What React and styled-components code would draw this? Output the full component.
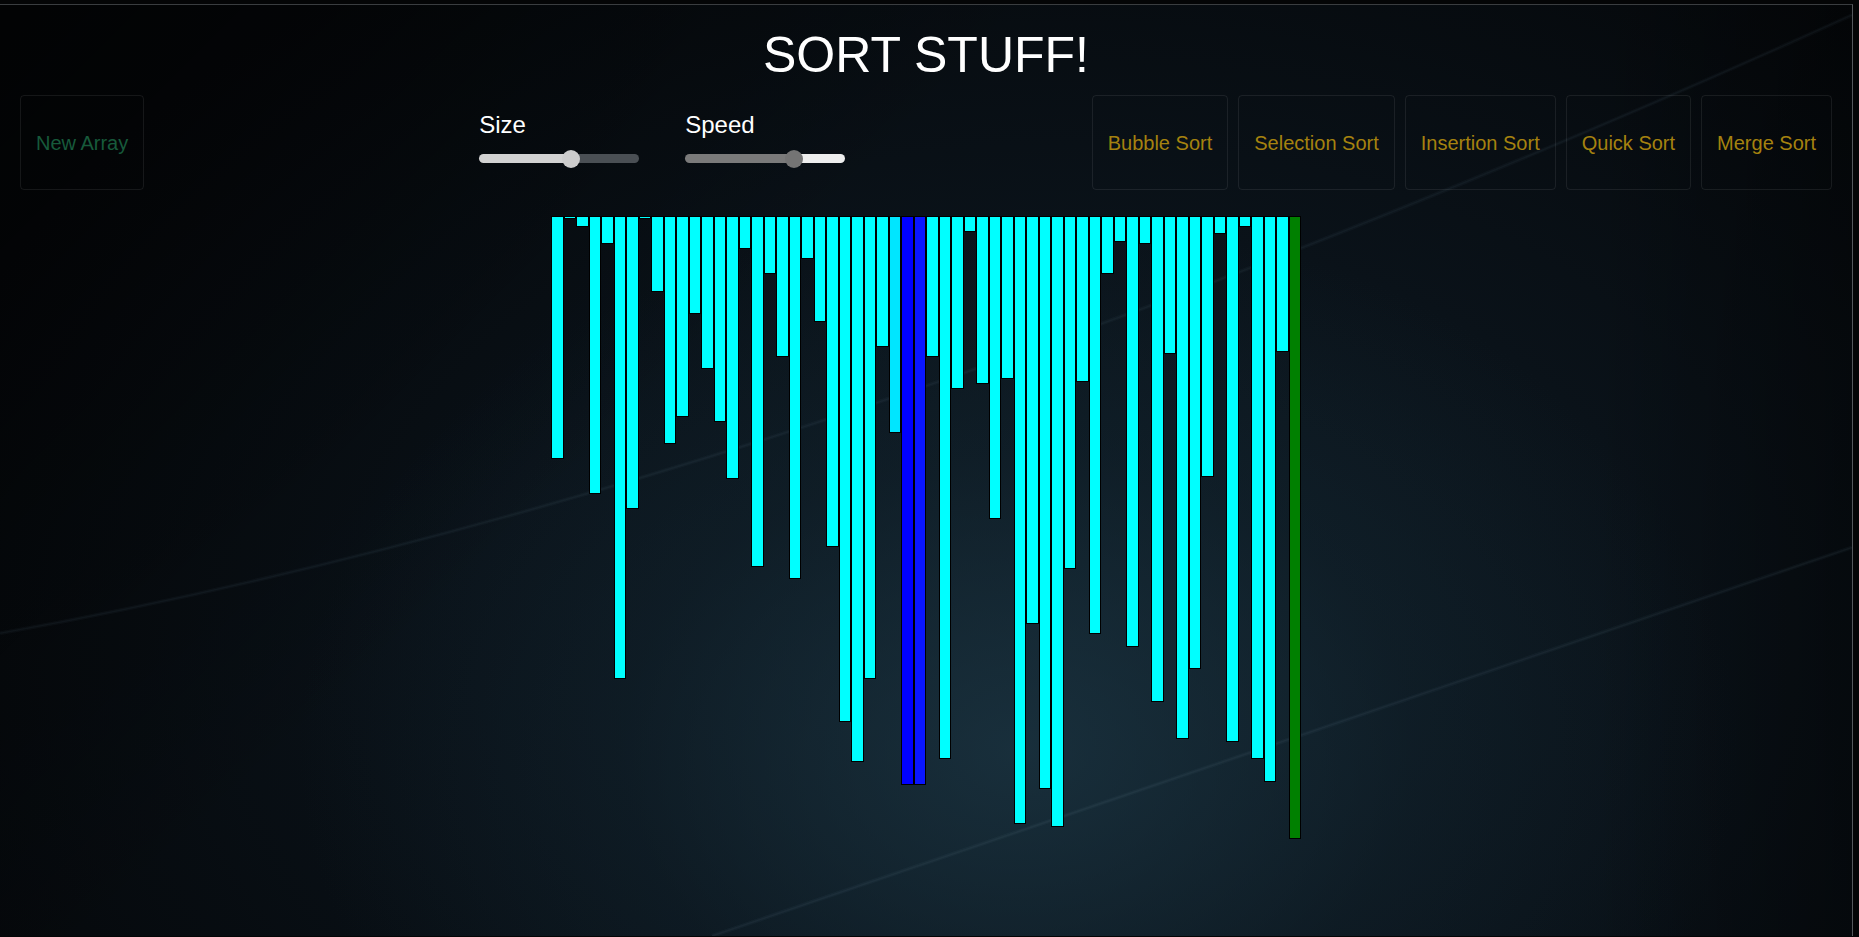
import React, { useState } from "react";
import styled, { createGlobalStyle } from "styled-components";

const BAR_HEIGHTS = [
  243, 3, 11, 278, 28, 463, 293, 3, 76, 228, 201, 98, 153, 206, 263, 33, 351,
  58, 141, 363, 43, 106, 331, 506, 546, 463, 131, 217, 569, 569, 141, 543, 173,
  16, 168, 303, 163, 608, 408, 573, 611, 353, 166, 418, 58, 26, 431, 28, 486,
  138, 523, 453, 261, 18, 526, 11, 543, 566, 136, 623,
];

// bar tones while a sort is running
const TONES = {
  idle: "#00ffff",
  fading: "#00e6ff",
  compare: "#0000ff",
  swap: "#0a16ff",
  sorted: "#008000",
};

const toneFor = (i) => {
  if (i === 27) return "fading";
  if (i === 28) return "compare";
  if (i === 29) return "swap";
  if (i === 59) return "sorted";
  return "idle";
};

const SORTS = [
  "Bubble Sort",
  "Selection Sort",
  "Insertion Sort",
  "Quick Sort",
  "Merge Sort",
];

const TRACK = 160;
const THUMB = 18;

const lines = `<svg xmlns="http://www.w3.org/2000/svg" viewBox="0 0 1852 932" preserveAspectRatio="none">
<path d="M0,629 Q806,484 1852,10" fill="none" stroke="rgba(150,180,200,0.04)" stroke-width="4"/>
<path d="M0,629 Q806,484 1852,10" fill="none" stroke="rgba(150,180,200,0.045)" stroke-width="1.5"/>
<path d="M712,932 L1852,543" fill="none" stroke="rgba(150,180,200,0.045)" stroke-width="4"/>
<path d="M712,932 L1852,543" fill="none" stroke="rgba(150,180,200,0.05)" stroke-width="1.5"/>
</svg>`;

const linesUrl = `url("data:image/svg+xml;charset=utf-8,${encodeURIComponent(lines)}")`;

const GlobalStyle = createGlobalStyle`
  html, body {
    margin: 0;
    padding: 0;
    background: #040506;
    overflow: hidden;
  }
  * {
    box-sizing: border-box;
  }
`;

const App = () => {
  const [size, setSize] = useState(58);
  const [speed, setSpeed] = useState(70);

  return (
    <Page>
      <GlobalStyle />
      <Frame>
        <Title>SORT STUFF!</Title>
        <Controls>
          <Button $color="#175a3b">New Array</Button>
          <SliderGroup>
            <Slider
              label="Size"
              value={size}
              onChange={setSize}
              fill="#d2d2d2"
              rest="#4a4f54"
              thumb="#cccccc"
            />
            <Slider
              label="Speed"
              value={speed}
              onChange={setSpeed}
              fill="#7a7a7a"
              rest="#eeeeee"
              thumb="#747474"
            />
          </SliderGroup>
          <SortButtons>
            {SORTS.map((name) => (
              <Button key={name} $color="#a5820f">
                {name}
              </Button>
            ))}
          </SortButtons>
        </Controls>
        <Bars>
          {BAR_HEIGHTS.map((h, i) => (
            <Bar key={i} $tone={toneFor(i)} style={{ height: h }} />
          ))}
        </Bars>
      </Frame>
    </Page>
  );
};

const Slider = ({ label, value, onChange, fill, rest, thumb }) => {
  const pct = ((THUMB / 2 + (value / 100) * (TRACK - THUMB)) / TRACK) * 100;
  return (
    <SliderBox>
      <Label>{label}</Label>
      <Range
        type="range"
        min={0}
        max={100}
        value={value}
        onChange={(e) => onChange(Number(e.target.value))}
        $thumb={thumb}
        style={{
          background: `linear-gradient(to right, ${fill} 0%, ${fill} ${pct}%, ${rest} ${pct}%, ${rest} 100%)`,
        }}
      />
    </SliderBox>
  );
};

const Page = styled.div`
  height: 937px;
  border-bottom: 1px solid #55656e;
  background: #040506;
  font-family: "Liberation Sans", Arial, sans-serif;
`;

const Frame = styled.div`
  width: calc(100% - 6px);
  height: 932px;
  margin-top: 4px;
  border-top: 1px solid #3a3d40;
  border-right: 1px solid #54585c;
  display: flex;
  flex-direction: column;
  background:
    ${linesUrl} 0 0 / 100% 100% no-repeat,
    linear-gradient(135deg, rgba(0, 0, 0, 0.65) 0%, rgba(0, 0, 0, 0) 38%),
    linear-gradient(to left, rgba(0, 0, 0, 0.35) 0%, rgba(0, 0, 0, 0) 14%),
    radial-gradient(
      ellipse 720px 540px at 55% 80%,
      rgba(28, 54, 68, 0.75) 0%,
      rgba(20, 40, 52, 0.35) 55%,
      rgba(20, 40, 52, 0) 100%
    ),
    radial-gradient(
      ellipse 1200px 820px at 58% 68%,
      #0f1d26 0%,
      #0a1219 50%,
      #05080b 100%
    ),
    #040608;
`;

const Title = styled.h1`
  margin: 21px 0 0;
  font-size: 50px;
  line-height: 58px;
  font-weight: normal;
  color: #ffffff;
  text-align: center;
`;

const Controls = styled.div`
  display: flex;
  align-items: flex-start;
  margin-top: 11px;
  padding: 0 20px;
`;

const Button = styled.button`
  height: 95px;
  padding: 2px 15px 0;
  border: 1px solid rgba(255, 255, 255, 0.08);
  border-radius: 4px;
  background: transparent;
  color: ${(p) => p.$color};
  font-family: "Liberation Sans", Arial, sans-serif;
  font-size: 20px;
  line-height: 23px;
  white-space: nowrap;
  cursor: pointer;
`;

const SliderGroup = styled.div`
  display: flex;
  gap: 46px;
  margin-left: 335px;
  margin-top: 16px;
`;

const SliderBox = styled.div`
  display: flex;
  flex-direction: column;
`;

const Label = styled.span`
  color: #ffffff;
  font-size: 24px;
  line-height: 28px;
`;

const Range = styled.input`
  -webkit-appearance: none;
  appearance: none;
  width: ${TRACK}px;
  height: 9px;
  margin: 15px 0 0;
  border-radius: 5px;
  outline: none;

  &::-webkit-slider-thumb {
    -webkit-appearance: none;
    appearance: none;
    width: ${THUMB}px;
    height: ${THUMB}px;
    border-radius: 50%;
    background: ${(p) => p.$thumb};
    cursor: pointer;
  }
`;

const SortButtons = styled.div`
  display: flex;
  gap: 10px;
  margin-left: auto;
`;

const Bars = styled.div`
  display: flex;
  align-items: flex-start;
  width: 750px;
  margin: 26px auto 0;
`;

const Bar = styled.div`
  flex: 1;
  border: 1px solid #000000;
  background: ${(p) => TONES[p.$tone]};
`;

export default App;
